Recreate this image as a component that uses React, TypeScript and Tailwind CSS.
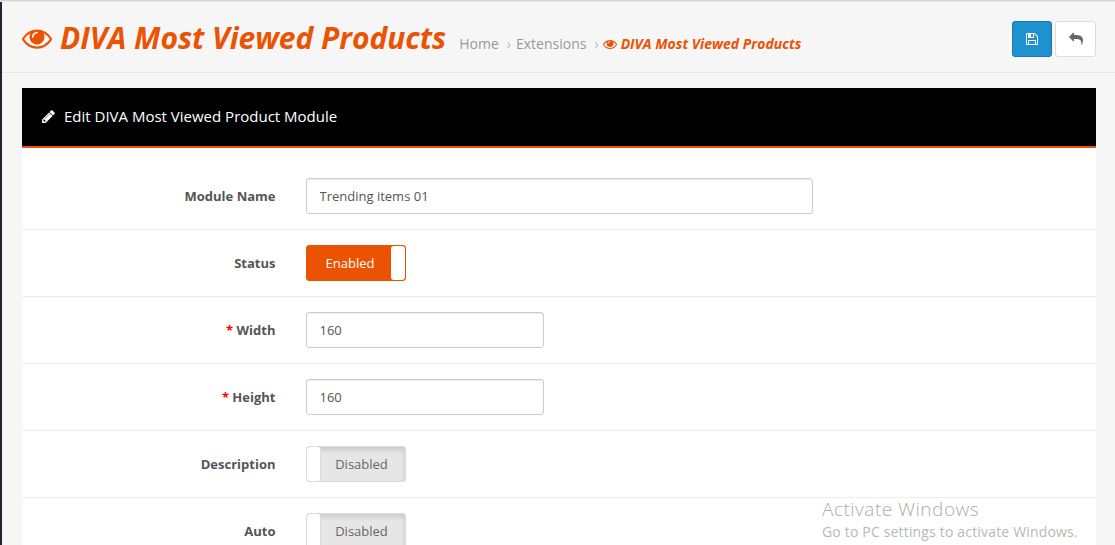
import type { ReactNode } from "react";

const EYE =
  "M1664 960q-152-236-381-353 61 104 61 225 0 185-131.5 316.5t-316.5 131.5-316.5-131.5-131.5-316.5q0-121 61-225-229 117-381 353 133 205 333.5 326.5t434.5 121.5 434.5-121.5 333.5-326.5zm-720-384q0-20-14-34t-34-14q-125 0-214.5 89.5t-89.5 214.5q0 20 14 34t34 14 34-14 14-34q0-86 61-147t147-61q20 0 34-14t14-34zm848 384q0 34-20 69-140 230-376.5 368.5t-499.5 138.5-499.5-139-376.5-368q-20-35-20-69t20-69q140-229 376.5-368t499.5-139 499.5 139 376.5 368q20 35 20 69z";
const PENCIL =
  "M491 1536l91-91-235-235-91 91v107h128v128h107zm523-928q0-22-22-22-10 0-17 7l-542 542q-7 7-7 17 0 22 22 22 10 0 17-7l542-542q7-7 7-17zm-54-192l416 416-832 832h-416v-416zm683 96q0 53-37 90l-166 166-416-416 166-165q36-38 90-38 53 0 91 38l235 234q37 39 37 91z";
const SAVE =
  "M512 1536h768v-384h-768v384zm896 0h128v-896q0-14-10-38.5t-20-34.5l-281-281q-10-10-34-20t-39-10v416q0 40-28 68t-68 28h-576q-40 0-68-28t-28-68v-416h-128v1280h128v-416q0-40 28-68t68-28h832q40 0 68 28t28 68v416zm-384-928v-320q0-13-9.5-22.5t-22.5-9.5h-192q-13 0-22.5 9.5t-9.5 22.5v320q0 13 9.5 22.5t22.5 9.5h192q13 0 22.5-9.5t9.5-22.5zm640 32v928q0 40-28 68t-68 28h-1344q-40 0-68-28t-28-68v-1344q0-40 28-68t68-28h928q40 0 88 20t76 48l280 280q28 28 48 76t20 88z";
const SHARE =
  "M1792 640q0 26-19 45l-512 512q-19 19-45 19t-45-19-19-45v-256h-224q-98 0-175.5 6t-154 21.5-133 42.5-105.5 69.5-80 101-48.5 138.5-17.5 181q0 55 5 123 0 6 2.5 23.5t2.5 26.5q0 15-8.5 25t-23.5 10q-16 0-28-17-7-9-13-22t-13.5-30-10.5-24q-127-285-127-451 0-199 53-333 162-403 875-403h224v-256q0-26 19-45t45-19 45 19l512 512q19 19 19 45z";

function Icon({ d, className }: { d: string; className: string }) {
  return (
    <svg viewBox="0 0 1792 1792" fill="currentColor" className={className} aria-hidden="true">
      <path d={d} />
    </svg>
  );
}

function Row({ label, required, children }: { label: string; required?: boolean; children: ReactNode }) {
  return (
    <div className="flex h-[67px] shrink-0 items-center border-b border-[#ededed]">
      <div className="w-[253.5px] shrink-0 text-right text-[13px] font-bold leading-5 text-[#555]">
        {required && <span className="text-[#f00]">* </span>}
        {label}
      </div>
      <div className="ml-[30.5px]">{children}</div>
    </div>
  );
}

function Field({ value, className }: { value: string; className: string }) {
  return (
    <input
      defaultValue={value}
      className={`block h-9 rounded-[3px] border border-[#ccc] bg-white px-[12.5px] text-[13px] text-[#555] shadow-[inset_0_1px_1px_rgba(0,0,0,0.075)] outline-none ${className}`}
    />
  );
}

function Toggle({ on }: { on?: boolean }) {
  return on ? (
    <button className="flex h-9 w-[100px] overflow-hidden rounded-[3px] border border-[#eb5202] bg-[#eb5202] text-[13px] text-white">
      <span className="flex h-full w-[84px] items-center justify-center pl-0.5 pt-0.5">Enabled</span>
      <span className="h-full w-[14px] rounded-[3px] bg-white" />
    </button>
  ) : (
    <button className="flex h-9 w-[100px] overflow-hidden rounded-[3px] border border-[#dadada] bg-[#e6e6e6] text-[13px] text-[#666] shadow-[inset_0_3px_5px_rgba(0,0,0,0.125)]">
      <span className="h-full w-[14px] rounded-[3px] border-r border-[#dadada] bg-white" />
      <span className="flex h-full w-[84px] items-center justify-center pr-[3px] pt-0.5">Disabled</span>
    </button>
  );
}

export default function App() {
  return (
    <div className="relative flex h-[545px] w-[1115px] overflow-hidden bg-[#f6f6f6] font-['Open_Sans',sans-serif]">
      <div className="h-full w-0.5 shrink-0 bg-[#1c2636]" />
      <div className="flex min-w-0 flex-1 flex-col">
        <header className="flex h-[73px] shrink-0 items-start border-b border-[#e8e8e8] pl-5 pr-[19px]">
          <h1 className="flex items-start whitespace-nowrap pt-[17.5px] text-[30px] font-bold italic leading-10 tracking-[-0.04px] text-[#eb5202]">
            <Icon d={EYE} className="mr-2 mt-[5.5px] size-[30px]" />
            <span>DIVA Most Viewed Products</span>
          </h1>
          <nav className="ml-[13px] flex items-center whitespace-nowrap pt-[34px] text-sm leading-5 text-[#999]">
            <span>Home</span>
            <span className="ml-2 mr-[5px] text-[#bbb]">›</span>
            <span>Extensions</span>
            <span className="ml-2 mr-[4.5px] text-[#bbb]">›</span>
            <Icon d={EYE} className="mr-[3.5px] size-[14px] text-[#eb5202]" />
            <span className="font-bold italic text-[#eb5202]">DIVA Most Viewed Products</span>
          </nav>
          <div className="ml-auto flex gap-[3px] pt-[21px]">
            <button className="flex h-9 w-10 items-center justify-center rounded-[3px] border border-[#1978ab] bg-[#1e91cf] text-white">
              <Icon d={SAVE} className="size-[14px]" />
            </button>
            <button className="flex h-9 w-[41px] items-center justify-center rounded-[3px] border border-[#ddd] bg-white text-[#666]">
              <Icon d={SHARE} className="size-[14px] -scale-x-100" />
            </button>
          </div>
        </header>
        <main className="ml-5 mr-[19px] mt-[15px] flex min-h-0 flex-1 flex-col overflow-hidden bg-white">
          <h2 className="flex h-[60px] shrink-0 items-center border-b-2 border-[#eb5202] bg-black pb-0.5 pl-[19px] text-[15px] text-white">
            <Icon d={PENCIL} className="mr-2 size-[15px]" />
            Edit DIVA Most Viewed Product Module
          </h2>
          <form className="flex flex-col pt-[15px]">
            <Row label="Module Name">
              <Field value="Trending items 01" className="w-[507px]" />
            </Row>
            <Row label="Status">
              <Toggle on />
            </Row>
            <Row label="Width" required>
              <Field value="160" className="w-[238px]" />
            </Row>
            <Row label="Height" required>
              <Field value="160" className="w-[238px]" />
            </Row>
            <Row label="Description">
              <Toggle />
            </Row>
            <Row label="Auto">
              <Toggle />
            </Row>
          </form>
        </main>
      </div>
      <div className="absolute inset-x-0 top-0 h-0.5 border-b border-[#e6e6e6] bg-[#d5d5d5]" />
      <div className="absolute left-[822px] top-[497px] whitespace-nowrap font-['Open_Sans',sans-serif] text-[#b8b8b8]">
        <div className="text-[19px] font-light leading-6 tracking-[0.5px] text-[#acacac]">Activate Windows</div>
        <div className="pt-px text-[14px] leading-5 tracking-[0.17px]">Go to PC settings to activate Windows.</div>
      </div>
    </div>
  );
}
